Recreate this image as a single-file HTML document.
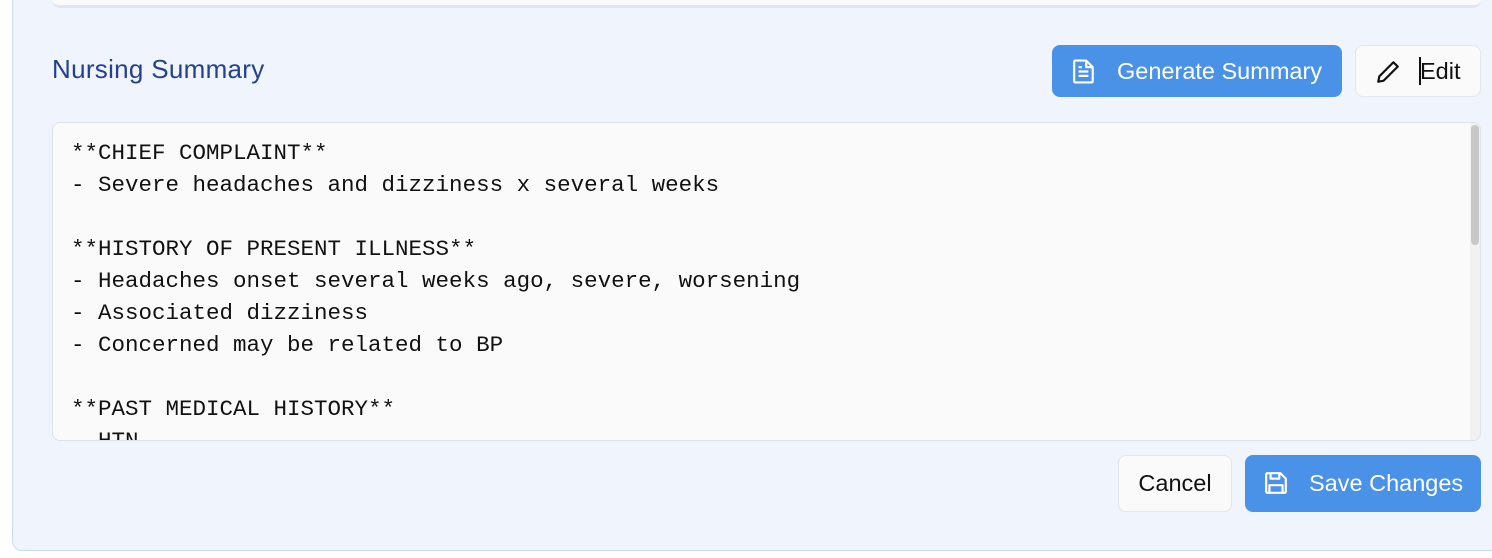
<!DOCTYPE html>
<html><head><style>
body{margin:0;width:1492px;height:558px;background:#fff;font-family:"Liberation Sans",sans-serif;position:relative;overflow:hidden}
.outer{position:absolute;left:12px;top:-10px;width:1490px;height:561px;background:#eff4fd;border:1px solid #c9daf4;border-radius:10px;box-sizing:border-box}
.topcard{position:absolute;left:52px;top:-10px;width:1429px;height:15px;background:#fafafa;border-bottom:3px solid #e2e6ee;border-radius:0 0 8px 8px}
.title{position:absolute;left:52px;top:54px;font-size:26px;letter-spacing:0.3px;color:#25408f}
.btn{position:absolute;box-sizing:border-box;border-radius:8px;display:flex;align-items:center;font-size:23.5px}
.blue{background:#4a92e7;color:#fff}
.white{background:#fafafa;border:1px solid #e4e7ec;color:#111}
.ta{position:absolute;left:52px;top:122px;width:1429px;height:319px;box-sizing:border-box;background:#fafafa;border:1px solid #dde2ea;border-radius:8px;overflow:hidden}
pre{margin:0;position:absolute;left:18px;top:14px;font-family:"Liberation Mono",monospace;font-size:22.5px;line-height:32px;color:#111}
.sb{position:absolute;right:0;top:0;width:10px;height:100%;background:#f1f1f1}
.sb div{position:absolute;left:1px;top:2px;width:8px;height:120px;background:#c8c8c8;border-radius:4px}
</style></head><body>
<div class="outer"></div>
<div class="topcard"></div>
<div class="title">Nursing Summary</div>
<div class="btn blue" style="left:1052px;top:45px;width:290px;height:52px">
<svg style="position:absolute;left:20px;top:13px" width="24" height="27" viewBox="0 0 22 24" fill="none" stroke="#fff" stroke-width="2" stroke-linejoin="round"><path d="M3 2h10l6 6v13a1 1 0 0 1-1 1H3a1 1 0 0 1-1-1V3a1 1 0 0 1 1-1z"/><path d="M13 2v6h6M6 12h9M6 16h9M6 8h3"/></svg>
<span style="position:absolute;left:65px">Generate Summary</span></div>
<div class="btn white" style="left:1355px;top:45px;width:126px;height:52px">
<svg style="position:absolute;left:19px;top:13px" width="26" height="26" viewBox="0 0 24 24" fill="none" stroke="#111" stroke-width="2" stroke-linejoin="round"><path d="M17 3l4 4L8 20l-5 1 1-5z"/></svg>
<span style="position:absolute;left:63px;top:11px;width:2px;height:28px;background:#111"></span>
<span style="position:absolute;left:64px">Edit</span></div>
<div class="ta"><pre>**CHIEF COMPLAINT**
- Severe headaches and dizziness x several weeks

**HISTORY OF PRESENT ILLNESS**
- Headaches onset several weeks ago, severe, worsening
- Associated dizziness
- Concerned may be related to BP

**PAST MEDICAL HISTORY**
- HTN</pre><div class="sb"><div></div></div></div>
<div class="btn white" style="left:1118px;top:455px;width:114px;height:57px;justify-content:center">Cancel</div>
<div class="btn blue" style="left:1245px;top:455px;width:236px;height:57px">
<svg style="position:absolute;left:19px;top:16px" width="24" height="24" viewBox="0 0 22 22" fill="none" stroke="#fff" stroke-width="2" stroke-linejoin="round"><path d="M2 3a1 1 0 0 1 1-1h12l5 5v12a1 1 0 0 1-1 1H3a1 1 0 0 1-1-1z"/><path d="M6 2v5h8V2M5 20v-7h12v7"/></svg>
<span style="position:absolute;left:64px">Save Changes</span></div>
</body></html>
